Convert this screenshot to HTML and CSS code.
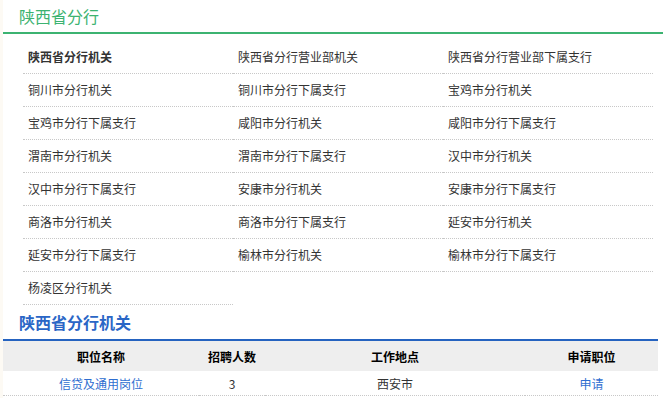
FILE: index.html
```html
<!DOCTYPE html>
<html lang="zh-CN">
  <head>
    <meta charset="UTF-8" />
    <meta name="viewport" content="width=device-width, initial-scale=1.0" />
    <title>陕西省分行</title>
    <link rel="stylesheet" href="styles.css">
  </head>
  <body>
    <div class="page">
      <h2 class="title green">陕西省分行</h2>
      <ul class="orgs">
        <li class="current">陕西省分行机关</li>
        <li>陕西省分行营业部机关</li>
        <li>陕西省分行营业部下属支行</li>
        <li>铜川市分行机关</li>
        <li>铜川市分行下属支行</li>
        <li>宝鸡市分行机关</li>
        <li>宝鸡市分行下属支行</li>
        <li>咸阳市分行机关</li>
        <li>咸阳市分行下属支行</li>
        <li>渭南市分行机关</li>
        <li>渭南市分行下属支行</li>
        <li>汉中市分行机关</li>
        <li>汉中市分行下属支行</li>
        <li>安康市分行机关</li>
        <li>安康市分行下属支行</li>
        <li>商洛市分行机关</li>
        <li>商洛市分行下属支行</li>
        <li>延安市分行机关</li>
        <li>延安市分行下属支行</li>
        <li>榆林市分行机关</li>
        <li>榆林市分行下属支行</li>
        <li>杨凌区分行机关</li>
      </ul>

      <h2 class="title blue">陕西省分行机关</h2>
      <table class="jobs">
        <thead>
          <tr>
            <th class="c1">职位名称</th>
            <th class="c2">招聘人数</th>
            <th class="c3">工作地点</th>
            <th class="c4">申请职位</th>
          </tr>
        </thead>
        <tbody>
          <tr>
            <td class="c1"><a href="#">信贷及通用岗位</a></td>
            <td class="c2">3</td>
            <td class="c3">西安市</td>
            <td class="c4"><a href="#">申请</a></td>
          </tr>
        </tbody>
      </table>
    </div>
  </body>
</html>
```

FILE: styles.css
```css
body {
  margin: 0;
  padding-left: 3px;
  background: #fdfaf4;
  font-family: "Noto Sans CJK SC", "Liberation Sans", sans-serif;
  font-size: 12px;
  color: #333;
}

.page {
  background: #fff;
  min-height: 398px;
}

.title {
  margin: 0;
  padding-left: 16px;
  font-size: 16px;
}

.title.green {
  height: 32px;
  line-height: 32px;
  font-weight: normal;
  color: #3cb371;
  border-bottom: 2px solid #3cb371;
}

.title.blue {
  width: 639px;
  height: 34px;
  line-height: 34px;
  font-weight: bold;
  color: #2a66c6;
  border-bottom: 2px solid #2563c0;
}

.orgs {
  list-style: none;
  margin: 7px 0 0;
  padding: 0 0 0 20px;
  display: grid;
  grid-template-columns: repeat(3, 210px);
}

.orgs li {
  height: 32px;
  line-height: 32px;
  padding-left: 5px;
  border-bottom: 1px dotted #c8c8c8;
  white-space: nowrap;
}

.orgs li.current {
  font-weight: bold;
}

.jobs {
  width: 655px;
  border-collapse: collapse;
  table-layout: fixed;
}

.jobs th {
  height: 30px;
  background: #eee;
  font-weight: bold;
  color: #000;
  padding: 0;
}

.jobs td {
  height: 24px;
  padding: 0;
  text-align: center;
  border-bottom: 1px dotted #c8c8c8;
}

.jobs a {
  color: #2e6ed0;
  text-decoration: none;
}

.c1 { width: 196px; }
.c2 { width: 66px; }
.c3 { width: 260px; }
```
